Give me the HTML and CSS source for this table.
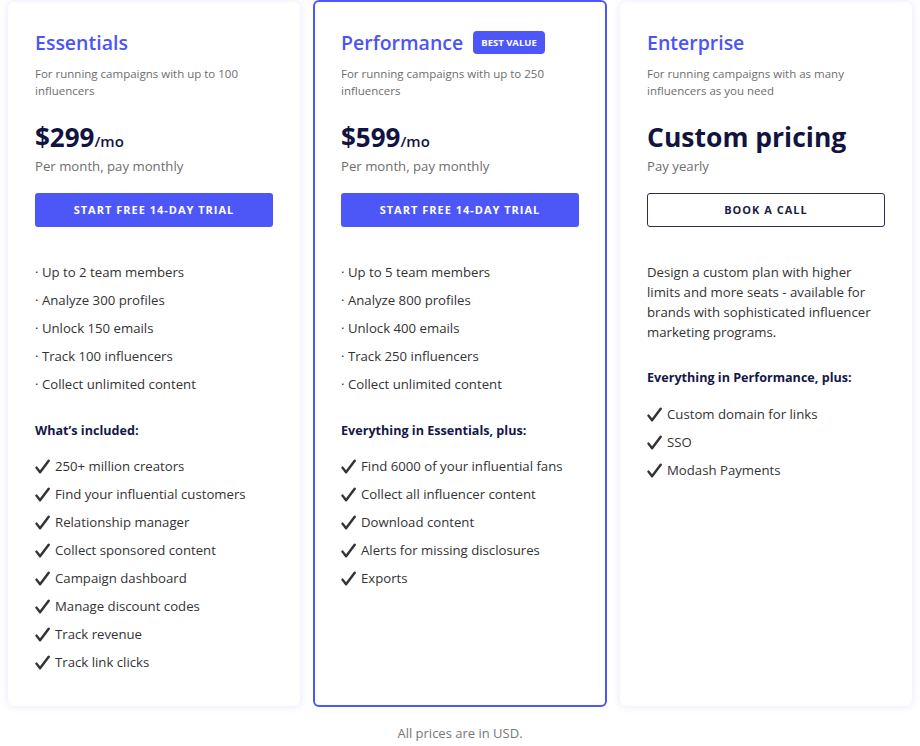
FILE: index.html
```html
<!DOCTYPE html>
<html lang="en">
<head>
<meta charset="utf-8">
<title>Pricing</title>
<link rel="stylesheet" href="styles.css">
</head>
<body>
<main class="pricing">
  <div class="plans">
    <section class="card">
      <h2 class="plan-name">Essentials</h2>
      <p class="plan-desc">For running campaigns with up to 100 influencers</p>
      <div class="price"><span class="amount">$299</span><span class="per">/mo</span></div>
      <p class="billing">Per month, pay monthly</p>
      <a class="btn btn-primary" href="#">Start free 14-day trial</a>
      <ul class="limits">
        <li>· Up to 2 team members</li>
        <li>· Analyze 300 profiles</li>
        <li>· Unlock 150 emails</li>
        <li>· Track 100 influencers</li>
        <li>· Collect unlimited content</li>
      </ul>
      <h3 class="section-title">What’s included:</h3>
      <ul class="features">
        <li><svg class="check" viewBox="0 0 16 16" aria-hidden="true"><path d="M1.6 9.2 L5.4 14.2 L14.6 1.8"/></svg>250+ million creators</li>
        <li><svg class="check" viewBox="0 0 16 16" aria-hidden="true"><path d="M1.6 9.2 L5.4 14.2 L14.6 1.8"/></svg>Find your influential customers</li>
        <li><svg class="check" viewBox="0 0 16 16" aria-hidden="true"><path d="M1.6 9.2 L5.4 14.2 L14.6 1.8"/></svg>Relationship manager</li>
        <li><svg class="check" viewBox="0 0 16 16" aria-hidden="true"><path d="M1.6 9.2 L5.4 14.2 L14.6 1.8"/></svg>Collect sponsored content</li>
        <li><svg class="check" viewBox="0 0 16 16" aria-hidden="true"><path d="M1.6 9.2 L5.4 14.2 L14.6 1.8"/></svg>Campaign dashboard</li>
        <li><svg class="check" viewBox="0 0 16 16" aria-hidden="true"><path d="M1.6 9.2 L5.4 14.2 L14.6 1.8"/></svg>Manage discount codes</li>
        <li><svg class="check" viewBox="0 0 16 16" aria-hidden="true"><path d="M1.6 9.2 L5.4 14.2 L14.6 1.8"/></svg>Track revenue</li>
        <li><svg class="check" viewBox="0 0 16 16" aria-hidden="true"><path d="M1.6 9.2 L5.4 14.2 L14.6 1.8"/></svg>Track link clicks</li>
      </ul>
    </section>

    <section class="card card-featured">
      <div class="name-row">
        <h2 class="plan-name">Performance</h2>
        <span class="badge">Best value</span>
      </div>
      <p class="plan-desc">For running campaigns with up to 250 influencers</p>
      <div class="price"><span class="amount">$599</span><span class="per">/mo</span></div>
      <p class="billing">Per month, pay monthly</p>
      <a class="btn btn-primary" href="#">Start free 14-day trial</a>
      <ul class="limits">
        <li>· Up to 5 team members</li>
        <li>· Analyze 800 profiles</li>
        <li>· Unlock 400 emails</li>
        <li>· Track 250 influencers</li>
        <li>· Collect unlimited content</li>
      </ul>
      <h3 class="section-title">Everything in Essentials, plus:</h3>
      <ul class="features">
        <li><svg class="check" viewBox="0 0 16 16" aria-hidden="true"><path d="M1.6 9.2 L5.4 14.2 L14.6 1.8"/></svg>Find 6000 of your influential fans</li>
        <li><svg class="check" viewBox="0 0 16 16" aria-hidden="true"><path d="M1.6 9.2 L5.4 14.2 L14.6 1.8"/></svg>Collect all influencer content</li>
        <li><svg class="check" viewBox="0 0 16 16" aria-hidden="true"><path d="M1.6 9.2 L5.4 14.2 L14.6 1.8"/></svg>Download content</li>
        <li><svg class="check" viewBox="0 0 16 16" aria-hidden="true"><path d="M1.6 9.2 L5.4 14.2 L14.6 1.8"/></svg>Alerts for missing disclosures</li>
        <li><svg class="check" viewBox="0 0 16 16" aria-hidden="true"><path d="M1.6 9.2 L5.4 14.2 L14.6 1.8"/></svg>Exports</li>
      </ul>
    </section>

    <section class="card">
      <h2 class="plan-name">Enterprise</h2>
      <p class="plan-desc">For running campaigns with as many influencers as you need</p>
      <div class="price"><span class="amount amount-custom">Custom pricing</span></div>
      <p class="billing">Pay yearly</p>
      <a class="btn btn-outline" href="#">Book a call</a>
      <p class="custom-desc">Design a custom plan with higher limits and more seats - available for brands with sophisticated influencer marketing programs.</p>
      <h3 class="section-title section-title-custom">Everything in Performance, plus:</h3>
      <ul class="features features-custom">
        <li><svg class="check" viewBox="0 0 16 16" aria-hidden="true"><path d="M1.6 9.2 L5.4 14.2 L14.6 1.8"/></svg>Custom domain for links</li>
        <li><svg class="check" viewBox="0 0 16 16" aria-hidden="true"><path d="M1.6 9.2 L5.4 14.2 L14.6 1.8"/></svg>SSO</li>
        <li><svg class="check" viewBox="0 0 16 16" aria-hidden="true"><path d="M1.6 9.2 L5.4 14.2 L14.6 1.8"/></svg>Modash Payments</li>
      </ul>
    </section>
  </div>
  <p class="note">All prices are in USD.</p>
</main>
</body>
</html>
```

FILE: styles.css
```css
* { box-sizing: border-box; }

html, body {
  margin: 0;
  padding: 0;
  background: #ffffff;
}

body {
  font-family: "Open Sans", "Noto Sans", "Liberation Sans", sans-serif;
  color: #333333;
  -webkit-font-smoothing: antialiased;
}

.pricing {
  padding: 2px 8px 0;
}

.plans {
  display: grid;
  grid-template-columns: 292px 294px 292px;
  column-gap: 13px;
  align-items: stretch;
}

.card {
  background: #ffffff;
  border-radius: 6px;
  padding: 27px 27px 30px;
  box-shadow: 0 0 8px rgba(90, 100, 245, 0.16);
  display: flex;
  flex-direction: column;
}

.card-featured {
  border: 2px solid #4d57f6;
  margin-top: -2px;
  margin-bottom: -1px;
  padding: 27px 26px 30px;
  box-shadow: none;
}

.name-row {
  display: flex;
  align-items: center;
  gap: 10px;
}

.plan-name {
  margin: 0;
  font-size: 19.5px;
  line-height: 28px;
  font-weight: 600;
  color: #4b55f5;
}

.badge {
  display: inline-block;
  background: #4d57f8;
  color: #ffffff;
  font-size: 9.5px;
  font-weight: 700;
  text-transform: uppercase;
  line-height: 23px;
  padding: 0 8px;
  border-radius: 4px;
  margin-top: -1px;
}

.plan-desc {
  margin: 8px 0 0;
  font-size: 11.5px;
  line-height: 17px;
  color: #6e6e6e;
}

.price {
  margin-top: 20px;
  height: 36px;
  line-height: 36px;
  color: #12143f;
  white-space: nowrap;
}

.amount {
  font-size: 26px;
  font-weight: 700;
}

.amount-custom {
  font-size: 26.5px;
}

.per {
  font-size: 15px;
  font-weight: 600;
}

.billing {
  margin: 1px 0 0;
  font-size: 13.2px;
  line-height: 20px;
  color: #6e6e6e;
}

.btn {
  display: block;
  margin-top: 17px;
  height: 34px;
  line-height: 34px;
  text-align: center;
  text-decoration: none;
  text-transform: uppercase;
  font-size: 11px;
  font-weight: 700;
  letter-spacing: 1px;
  border-radius: 3px;
}

.btn-primary {
  background: #4d57f8;
  color: #ffffff;
}

.btn-outline {
  border: 1px solid #2b2d52;
  line-height: 32px;
  color: #1b1d45;
}

.limits,
.features {
  list-style: none;
  margin: 0;
  padding: 0;
  font-size: 13.2px;
  line-height: 28px;
  color: #333333;
}

.limits {
  margin-top: 31px;
}

.section-title {
  margin: 23px 0 0;
  font-size: 12.6px;
  line-height: 20px;
  font-weight: 700;
  color: #15174a;
}

.features {
  margin-top: 11px;
}

.features li {
  display: flex;
  align-items: center;
}

.check {
  flex: none;
  width: 15px;
  height: 15px;
  margin: 0 5px 0 0;
  fill: none;
  stroke: #333333;
  stroke-width: 2.6;
  stroke-linecap: round;
  stroke-linejoin: round;
}

.custom-desc {
  margin: 35px 0 0;
  font-size: 13.2px;
  line-height: 20px;
  color: #333333;
}

.section-title-custom {
  margin-top: 26px;
}

.features-custom {
  margin-top: 12px;
}

.note {
  margin: 18px 0 0;
  text-align: center;
  font-size: 13px;
  line-height: 18px;
  color: #777777;
}
```
